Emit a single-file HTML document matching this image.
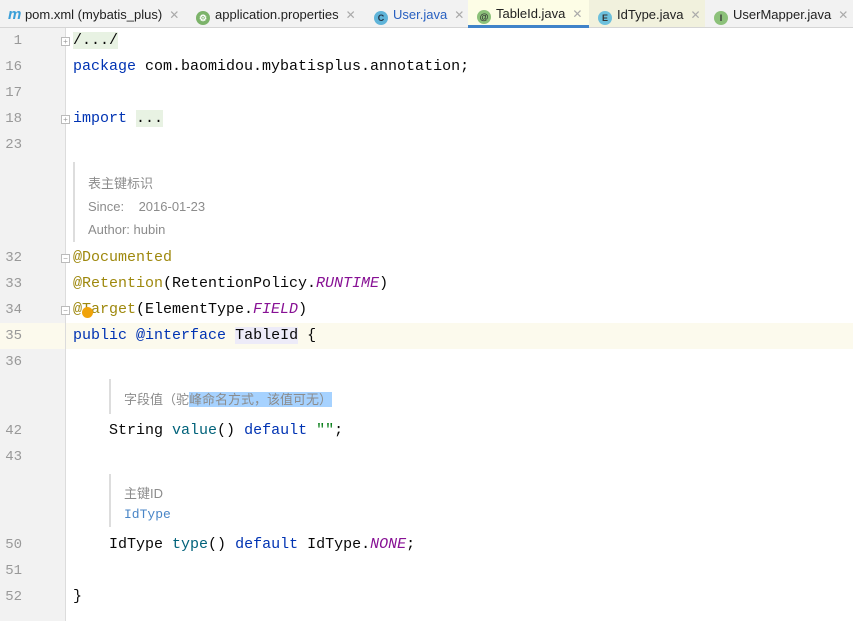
<!DOCTYPE html>
<html><head><meta charset="utf-8"><style>
*{margin:0;padding:0;box-sizing:border-box}
body{width:853px;height:621px;overflow:hidden;background:#fff;position:relative;font-family:"Liberation Mono",monospace}
.tabs{position:absolute;left:0;top:0;width:853px;height:28px;background:#f2f2f2;border-bottom:1px solid #d5d5d5;font-family:"Liberation Sans",sans-serif;font-size:13px;color:#222}
.tab{position:absolute;top:0;height:27px;line-height:29px;white-space:nowrap}
.x{color:#aaa;margin-left:7px;font-size:12px}
.ic{display:inline-block;width:14px;height:14px;border-radius:7px;vertical-align:-2px;margin-right:5px;font-size:9px;line-height:14px;text-align:center;font-weight:bold}
.gut{position:absolute;left:0;top:28px;width:66px;height:593px;background:#f2f2f2;border-right:1px solid #dcdcdc}
.ln{position:absolute;left:0;width:22px;text-align:right;color:#999;font-size:14px;height:26px;line-height:26px}
.code{position:absolute;left:73px;font-size:15px;height:26px;line-height:26px;white-space:pre;color:#080808}
.kw{color:#0033b3}.an{color:#9e880d}.it{color:#871094;font-style:italic}.fn{color:#00627a}.st{color:#067d17}
.fold{position:absolute;left:61px;width:9px;height:9px;border:1px solid #bbb;background:#fff;font-size:8px;line-height:7px;text-align:center;color:#999;font-family:"Liberation Sans",sans-serif}
.doc{position:absolute;border-left:2px solid #ddd;font-family:"Liberation Sans","Noto Sans CJK SC",sans-serif;font-size:13px;color:#8c8c8c}
</style></head><body>
<div class="tabs">
<div class="tab" style="left:8px"><span style="color:#3b9fd8;font-style:italic;font-weight:bold;font-size:15px">m</span> pom.xml (mybatis_plus)<span class="x">✕</span></div>
<div class="tab" style="left:196px"><span class="ic" style="background:#7cb36a;color:#fff">⚙</span>application.properties<span class="x">✕</span></div>
<div class="tab" style="left:374px"><span class="ic" style="background:#5fb4d9;color:#234">C</span><span style="color:#2860c0">User.java</span><span class="x">✕</span></div>
<div class="tab" style="left:468px;width:121px;padding-left:9px;background:#fdfde6;border-bottom:3px solid #4083c9;height:28px;line-height:28px"><span class="ic" style="background:#8cc17a;color:#333">@</span>TableId.java<span class="x">✕</span></div>
<div class="tab" style="left:589px;width:116px;padding-left:9px;background:#f1f1dd"><span class="ic" style="background:#6cc0dc;color:#333">E</span>IdType.java<span class="x">✕</span></div>
<div class="tab" style="left:714px"><span class="ic" style="background:#8cc17a;color:#333">I</span>UserMapper.java<span class="x">✕</span></div>
</div>
<div class="gut"></div>
<div style="position:absolute;left:0;top:323px;width:853px;height:26px;background:#fcfaed"></div>
<div style="position:absolute;left:0;top:323px;width:66px;height:26px;background:#fcfaed;border-right:1px solid #dcdcdc"></div>

<div class="ln" style="top:28px">1</div><div class="ln" style="top:54px">16</div><div class="ln" style="top:80px">17</div><div class="ln" style="top:106px">18</div><div class="ln" style="top:132px">23</div>
<div class="ln" style="top:245px">32</div><div class="ln" style="top:271px">33</div><div class="ln" style="top:297px">34</div><div class="ln" style="top:323px">35</div><div class="ln" style="top:349px">36</div>
<div class="ln" style="top:418px">42</div><div class="ln" style="top:444px">43</div><div class="ln" style="top:532px">50</div><div class="ln" style="top:558px">51</div><div class="ln" style="top:584px">52</div>

<div class="fold" style="top:37px">+</div><div class="fold" style="top:115px">+</div><div class="fold" style="top:254px">−</div><div class="fold" style="top:306px">−</div>

<div class="code" style="top:28px"><span style="background:#e8f2e3">/.../</span></div>
<div class="code" style="top:54px"><span class="kw">package</span> com.baomidou.mybatisplus.annotation;</div>
<div class="code" style="top:106px"><span class="kw">import</span> <span style="background:#e8f2e3">...</span></div>
<div class="doc" style="left:73px;top:162px;height:80px;padding:10px 0 0 13px;line-height:23px">表主键标识<br>Since:&nbsp;&nbsp;&nbsp; 2016-01-23<br>Author: hubin</div>
<div class="code" style="top:245px"><span class="an">@Documented</span></div>
<div class="code" style="top:271px"><span class="an">@Retention</span>(RetentionPolicy.<span class="it">RUNTIME</span>)</div>
<div class="code" style="top:297px"><span class="an">@Target</span>(ElementType.<span class="it">FIELD</span>)</div>
<div style="position:absolute;left:82px;top:307px;width:11px;height:11px;border-radius:6px;background:#f0a30a"></div>
<div class="code" style="top:323px"><span class="kw">public</span> <span class="kw">@interface</span> <span style="background:#edebf8">TableId</span> {</div>
<div class="doc" style="left:109px;top:379px;height:35px;padding:10px 0 0 13px">字段值（驼<span style="background:#a6d2ff">峰命名方式，该值可无）</span></div>
<div class="code" style="top:418px">    String <span class="fn">value</span>() <span class="kw">default</span> <span class="st">""</span>;</div>
<div class="doc" style="left:109px;top:474px;height:53px;padding:10px 0 0 13px;line-height:20px">主键ID<br><span style="color:#4a86c7;font-family:'Liberation Mono',monospace">IdType</span></div>
<div class="code" style="top:532px">    IdType <span class="fn">type</span>() <span class="kw">default</span> IdType.<span class="it">NONE</span>;</div>
<div class="code" style="top:584px">}</div>
</body></html>
